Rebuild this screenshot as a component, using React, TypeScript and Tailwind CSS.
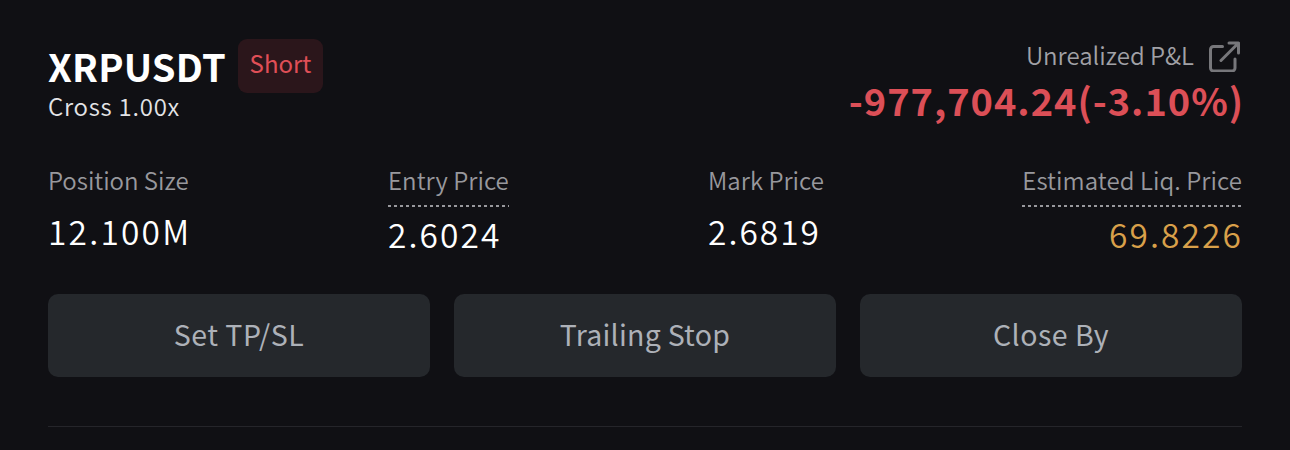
import clsx from 'clsx';

const position = {
  symbol: 'XRPUSDT',
  side: 'Short',
  margin: 'Cross 1.00x',
  pnl: '-977,704.24(-3.10%)',
};

const stats = [
  { label: 'Position Size', value: '12.100M', hint: false, box: 'w-[340px] items-start', labelCls: 'tracking-[-0.02px]', valueCls: 'text-white tracking-[2.2px]' },
  { label: 'Entry Price', value: '2.6024', hint: true, box: 'w-[320px] items-start', labelCls: 'tracking-[0.05px]', valueCls: 'text-white tracking-[2.1px]' },
  { label: 'Mark Price', value: '2.6819', hint: false, box: 'items-start', labelCls: 'tracking-[0.05px]', valueCls: 'text-white tracking-[2px]' },
  { label: 'Estimated Liq. Price', value: '69.8226', hint: true, box: 'ml-auto items-end', labelCls: 'tracking-[0.08px]', valueCls: 'text-[#d9a04a] tracking-[2.1px] -mr-px' },
];

const actions = [
  { label: 'Set TP/SL', cls: 'tracking-[0.5px]' },
  { label: 'Trailing Stop', cls: 'tracking-[0.25px]' },
  { label: 'Close By', cls: 'tracking-[0.5px]' },
];

function ShareIcon() {
  return (
    <svg className="-mt-px mr-0.5 h-8 w-8" viewBox="0 0 32 32" fill="none" stroke="#77777b" strokeWidth="3" strokeLinecap="round" strokeLinejoin="round">
      <path d="M14.5 6.5H5.5a3 3 0 0 0-3 3V28a3 3 0 0 0 3 3H24a3 3 0 0 0 3-3V19" />
      <path d="M13 20.5L30.5 3M21 3h9.5V13" />
    </svg>
  );
}

export default function App() {
  return (
    <div className="h-[450px] w-full overflow-hidden bg-[#101014] px-12 font-['Noto_Sans_CJK_SC',sans-serif] whitespace-nowrap">
      <div className="flex h-[166px] justify-between">
        <div>
          <div className="flex h-[92px]">
            <h1 className="mt-[44px] w-[190px] text-[38px] leading-[44px] font-bold tracking-[0.2px] text-white">{position.symbol}</h1>
            <span className="mt-[39px] h-[54px] w-[85px] rounded-[9px] bg-[#2b161b] text-center text-[24px] leading-[48px] text-[#e04f57]">{position.side}</span>
          </div>
          <p className="text-[24px] leading-[28px] font-[350] text-[#e4e4e7] tracking-[0.75px]">{position.margin}</p>
        </div>
        <div className="flex flex-col items-end pt-[41px]">
          <div className="flex gap-[14px]">
            <span className="text-[24px] leading-[28px] font-[350] text-[#a1a1a6]">Unrealized P&amp;L</span>
            <ShareIcon />
          </div>
          <p className="mt-[6px] -mr-0.5 text-[38px] leading-[44px] font-bold text-[#dc4f57] tracking-[0.95px]">{position.pnl}</p>
        </div>
      </div>

      <div className="flex h-32">
        {stats.map((item) => (
          <div key={item.label} className={clsx('flex flex-col', item.box)}>
            <div className={clsx('text-[24px] leading-[28px] font-[350] text-[#98989d]', item.labelCls)}>
              {item.label}
              {item.hint && (
                <div className="mt-[11px] h-[2px] bg-[repeating-linear-gradient(90deg,#98989d_0_3px,transparent_3px_6px)]" />
              )}
            </div>
            <p className={clsx('text-[33.5px] leading-[40px] font-[350]', item.hint ? 'mt-[7px]' : 'mt-[17px]', item.valueCls)}>{item.value}</p>
          </div>
        ))}
      </div>

      <div className="grid grid-cols-3 gap-6">
        {actions.map((item) => (
          <button key={item.label} className={clsx('h-[83px] rounded-[10px] bg-[#25282c] pb-0.5 text-[28.5px] font-normal text-[#adb1b8]', item.cls)}>
            {item.label}
          </button>
        ))}
      </div>
      <div className="mt-[49px] h-px bg-[#25252a]" />
    </div>
  );
}
